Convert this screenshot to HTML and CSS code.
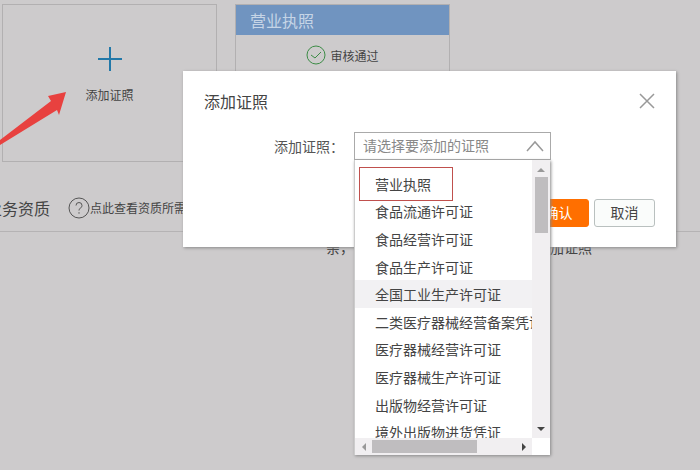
FILE: index.html
```html
<!DOCTYPE html>
<html lang="zh-CN">
<head>
  <meta charset="utf-8">
  <meta name="viewport" content="width=device-width">
  <title>添加证照</title>
  <link rel="stylesheet" href="styles.css">
</head>
<body>
  <main class="page">
    <div class="cards">
      <button type="button" class="card card-add">
        <svg class="plus" width="24" height="24" viewBox="0 0 24 24"><path d="M12 0v24M0 12h24"/></svg>
        <span>添加证照</span>
      </button>
      <section class="card">
        <h2 class="card-title">营业执照</h2>
        <p class="status">
          <svg width="20" height="20" viewBox="0 0 20 20"><circle cx="10" cy="10" r="9"/><path d="M5 10l4 3 6-6"/></svg>
          <span>审核通过</span>
        </p>
      </section>
    </div>

    <div class="section-head">
      <h2 class="section-title">业务资质</h2>
      <a class="help" href="#">
        <svg width="22" height="22" viewBox="0 0 22 22"><circle cx="11" cy="11" r="10"/><path d="M8 8.500Q8 5.500 11 5.500T14 8.500Q14 10 12.500 11T11 13.500M11 15.200v1.500"/></svg>
        <span>点此查看资质所需材料</span>
      </a>
    </div>
    <p class="notice">亲，您还没有添加业务资质，请先添加证照</p>
  </main>

  <svg class="arrow" width="68" height="56" viewBox="0 0 68 56"><path d="M66 2L48 6l3 5L0 50v5L57 20l2 5z"/></svg>

  <div class="modal" role="dialog" aria-labelledby="modal-title">
    <div class="modal-head">
      <h1 id="modal-title">添加证照</h1>
      <button type="button" class="close" aria-label="关闭">
        <svg width="16" height="16" viewBox="0 0 16 16"><path d="M1 1l14 14M15 1L1 15"/></svg>
      </button>
    </div>

    <div class="field">
      <label for="licence">添加证照：</label>
      <div class="picker">
        <select id="licence">
          <option>请选择要添加的证照</option>
        </select>
        <svg class="chevron" width="18" height="12" viewBox="0 0 18 12"><path d="M1 11l8-9 8 9"/></svg>

        <div class="dropdown">
          <div class="view">
            <ul class="options" role="listbox">
              <li role="option">营业执照</li>
              <li role="option">食品流通许可证</li>
              <li role="option">食品经营许可证</li>
              <li role="option">食品生产许可证</li>
              <li role="option" class="hover">全国工业生产许可证</li>
              <li role="option">二类医疗器械经营备案凭证</li>
              <li role="option">医疗器械经营许可证</li>
              <li role="option">医疗器械生产许可证</li>
              <li role="option">出版物经营许可证</li>
              <li role="option">境外出版物进货凭证</li>
            </ul>
            <span class="mark"></span>
          </div>
          <div class="bar bar-y">
            <svg class="dim" width="8" height="17" viewBox="0 0 8 17"><path d="M0 12l4-4 4 4z"/></svg>
            <span class="thumb"></span>
            <svg width="8" height="17" viewBox="0 0 8 17"><path d="M0 6h8l-4 4z"/></svg>
          </div>
          <div class="bar bar-x">
            <svg class="dim" width="17" height="8" viewBox="0 0 17 8"><path d="M11 0v8L7 4z"/></svg>
            <span class="thumb"></span>
            <svg width="17" height="8" viewBox="0 0 17 8"><path d="M7 0v8l4-4z"/></svg>
          </div>
        </div>
      </div>
    </div>

    <div class="actions">
      <button type="button" class="btn btn-ok">确认</button>
      <button type="button" class="btn">取消</button>
    </div>
  </div>
</body>
</html>
```
FILE: styles.css
```css
* { box-sizing: border-box; }
body {
  margin: 0;
  min-height: 100vh;
  overflow: hidden;
  background: #cdcbcc;
  color: #444;
  font-family: "Noto Sans CJK SC", sans-serif;
  font-size: 14px;
}
h1, h2, p, ul { margin: 0; padding: 0; font-weight: normal; }
button, select { font: inherit; color: inherit; margin: 0; }
svg { flex: none; fill: none; }

/* page behind the dialog */
.page { padding-top: 4px; }
.cards {
  display: flex;
  gap: 18px;
  padding-left: 2px;
}
.card {
  width: 215px;
  height: 158px;
  border: 1px solid #b2b0b1;
  font-size: 12px;
}
.card-add {
  display: flex;
  flex-direction: column;
  align-items: center;
  gap: 15px;
  padding: 42px 0 0;
  background: none;
}
.plus { stroke: #2278a8; stroke-width: 2; }
.card-title {
  padding: 0 14px;
  background: #7094c0;
  color: #c6d5e6;
  font-size: 16px;
  line-height: 30px;
}
.status {
  display: flex;
  align-items: center;
  justify-content: center;
  gap: 4px;
  padding-top: 10px;
}
.status svg { stroke: #3c8c46; }
.section-head {
  display: flex;
  align-items: center;
  gap: 18px;
  height: 48px;
  margin: 22px 0 0 -14px;
  border-bottom: 1px solid #b5b3b4;
}
.section-title { font-size: 16px; }
.help {
  display: flex;
  align-items: center;
  color: #444;
  font-size: 12px;
  text-decoration: none;
}
.help svg { stroke: #555; }
.notice {
  padding: 5px 0 0 326px;
  line-height: 20px;
  white-space: nowrap;
}
.arrow {
  position: absolute;
  left: 0;
  top: 90px;
  fill: #e8413f;
}

/* dialog */
.modal {
  position: absolute;
  left: 183px;
  right: 24px;
  top: 71px;
  padding: 18px 21px 20px;
  background: #fff;
  box-shadow: 1px 1px 3px #888;
}
.modal-head {
  display: flex;
  align-items: center;
  justify-content: space-between;
}
.modal-head h1 { font-size: 16px; line-height: 24px; }
.close {
  display: flex;
  padding: 0;
  border: 0;
  background: none;
}
.close svg { stroke: #999; stroke-width: 1.5; }
.field {
  display: flex;
  align-items: center;
  gap: 10px;
  margin: 19px 0 39px 70px;
}
.field label { color: #555; }
.picker {
  position: relative;
  width: 197px;
}
.picker select {
  display: block;
  width: 100%;
  height: 28px;
  padding: 0 8px 2px;
  border: 1px solid #aaa;
  border-radius: 0;
  background: #fff;
  color: #888;
  appearance: none;
}
.chevron {
  position: absolute;
  right: 7px;
  top: 8px;
  stroke: #999;
  stroke-width: 1.5;
  pointer-events: none;
}
.actions {
  display: flex;
  justify-content: flex-end;
  gap: 5px;
}
.btn {
  width: 61px;
  height: 28px;
  padding: 0 0 3px;
  border: 1px solid #b9c0bf;
  border-radius: 3px;
  background: #fafcfb;
}
.btn-ok {
  border-color: #ff6f00;
  background: #ff6f00;
  color: #fff;
}

/* open list */
.dropdown {
  position: absolute;
  z-index: 1;
  left: 0;
  right: 1px;
  top: 100%;
  display: grid;
  grid-template-columns: 1fr 18px;
  grid-template-rows: 278px 17px;
  border-left: 1px solid #ccc;
  background: #fff;
  box-shadow: 1px 1px 3px #888;
}
.view {
  position: relative;
  overflow: hidden;
  padding-top: 10px;
}
.options {
  display: grid;
  grid-auto-rows: 1fr;
  height: 276px;
  list-style: none;
}
.options li {
  display: flex;
  align-items: center;
  padding-left: 20px;
  white-space: nowrap;
}
.options .hover { background: #f2f1f3; }
.mark {
  position: absolute;
  left: 4px;
  top: 7px;
  width: 94px;
  height: 34px;
  border: 1px solid #c0504d;
}
.bar {
  display: flex;
  align-items: center;
  background: #f1eff1;
}
.bar svg { fill: #444; }
.bar .dim { fill: #999; }
.bar .thumb { background: #bfbdbf; }
.bar-y { flex-direction: column; }
.bar-y .thumb { width: 13px; height: 56px; margin-bottom: auto; }
.bar-x .thumb { width: 105px; height: 13px; margin-right: auto; }
```
